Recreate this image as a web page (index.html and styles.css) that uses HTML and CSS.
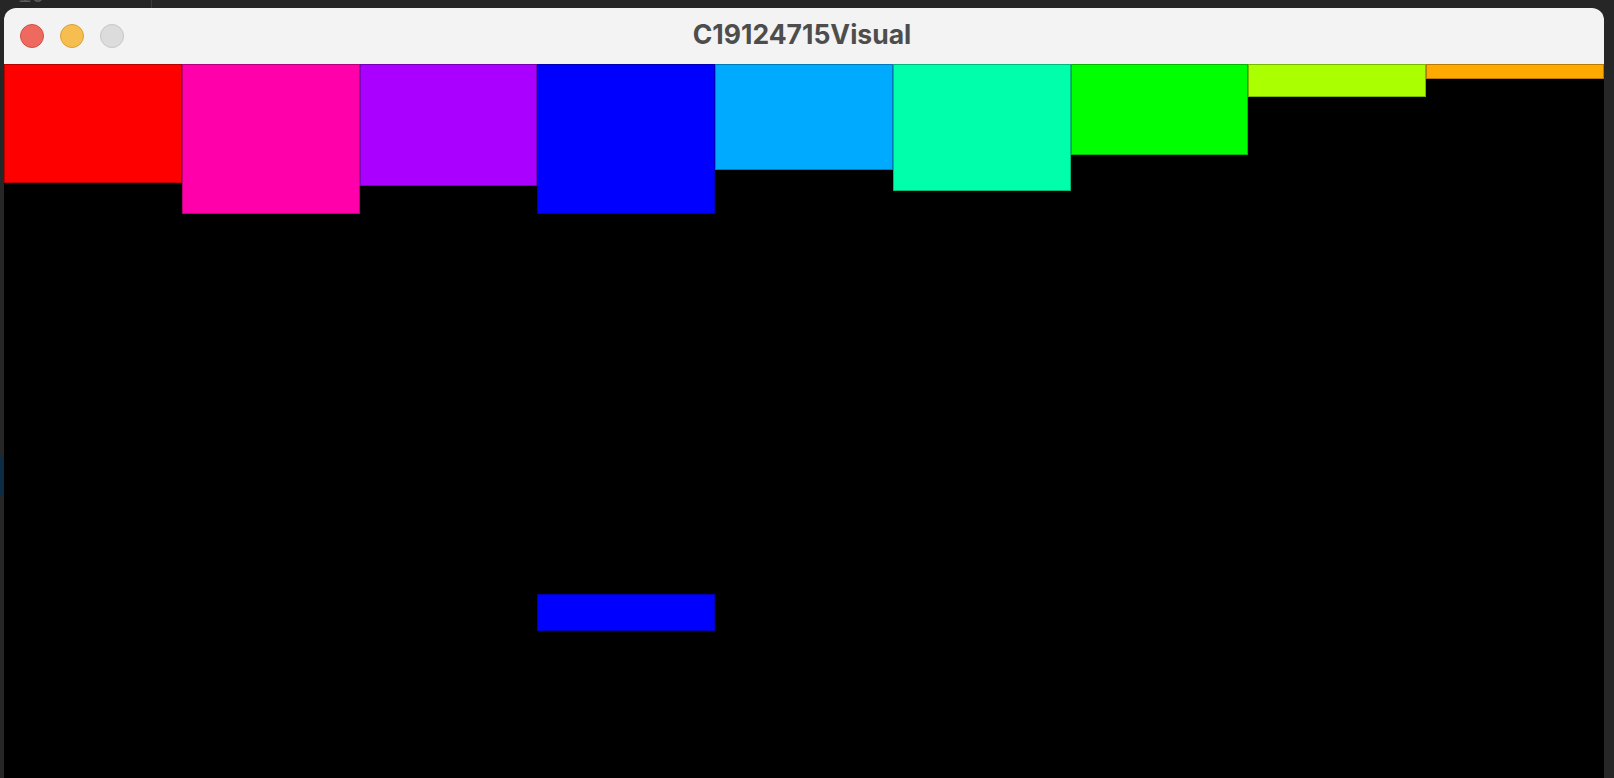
FILE: index.html
```html
<!DOCTYPE html>
<html lang="en">
<head>
<meta charset="utf-8">
<title>C19124715Visual</title>
<link rel="stylesheet" href="styles.css">
</head>
<body>
<div class="desktop">
  <div class="editor-peek">
    <span class="line-no">10</span>
    <span class="gutter"></span>
  </div>
  <div class="side-mark"></div>
  <div class="window">
    <div class="titlebar">
      <div class="lights">
        <span class="light close"></span>
        <span class="light min"></span>
        <span class="light max"></span>
      </div>
      <div class="title">C19124715Visual</div>
    </div>
    <div class="canvas">
      <div class="bar b1"></div>
      <div class="bar b2"></div>
      <div class="bar b3"></div>
      <div class="bar b4"></div>
      <div class="bar b5"></div>
      <div class="bar b6"></div>
      <div class="bar b7"></div>
      <div class="bar b8"></div>
      <div class="bar b9"></div>
      <div class="paddle"></div>
    </div>
  </div>
</div>
</body>
</html>
```
FILE: styles.css
```css
html, body {
  margin: 0;
  padding: 0;
  background: #262626;
  overflow: hidden;
}
.desktop {
  position: relative;
  width: 1614px;
  height: 778px;
  overflow: hidden;
  background: #262626;
}
.editor-peek {
  position: absolute;
  left: 0;
  top: 0;
  width: 1614px;
  height: 8px;
  overflow: hidden;
}
.line-no {
  position: absolute;
  left: 18px;
  top: -16px;
  font-family: "Liberation Mono", monospace;
  font-size: 22px;
  color: #5c5c5c;
}
.gutter {
  position: absolute;
  left: 151px;
  top: 0;
  width: 1px;
  height: 8px;
  background: #3c3c3c;
}
.side-mark {
  position: absolute;
  left: 0;
  top: 456px;
  width: 4px;
  height: 40px;
  background: #0e2b44;
}
.window {
  position: absolute;
  left: 4px;
  top: 8px;
  width: 1600px;
  height: 800px;
  border-radius: 12px 12px 0 0;
  overflow: hidden;
  background: #000;
  display: flex;
  flex-direction: column;
}
.titlebar {
  height: 56px;
  flex: 0 0 56px;
  box-sizing: border-box;
  padding-bottom: 4px;
  background: #f3f3f3;
  position: relative;
  display: flex;
  align-items: center;
  justify-content: center;
}
.lights {
  position: absolute;
  left: 16px;
  top: 16px;
  display: flex;
  gap: 16px;
}
.light {
  width: 24px;
  height: 24px;
  border-radius: 50%;
  box-sizing: border-box;
}
.close { background: #ee6a5f; border: 1px solid #d25146; }
.min { background: #f5be4f; border: 1px solid #d9a23c; }
.max { background: #dcdcdc; border: 1px solid #c6c6c6; }
.title {
  font-family: "Inter", "Liberation Sans", sans-serif;
  font-weight: 700;
  font-size: 26.5px;
  color: #4d4d4d;
  margin-left: -4px;
}
.canvas {
  flex: 1;
  display: grid;
  grid-template-columns: repeat(9, 1fr);
  align-items: start;
  background: #000;
}
.bar {
  grid-row: 1;
  box-shadow: inset 0 0 0 1px rgba(0, 0, 0, 0.28);
}
.b1 { grid-column: 1; height: 119px; background: #ff0000; }
.b2 { grid-column: 2; height: 150px; background: #ff00aa; }
.b3 { grid-column: 3; height: 122px; background: #aa00ff; }
.b4 { grid-column: 4; height: 150px; background: #0000ff; }
.b5 { grid-column: 5; height: 106px; background: #00aaff; }
.b6 { grid-column: 6; height: 127px; background: #00ffaa; }
.b7 { grid-column: 7; height: 91px; background: #00ff00; }
.b8 { grid-column: 8; height: 33px; background: #aaff00; }
.b9 { grid-column: 9; height: 15px; background: #ffaa00; }
.paddle {
  grid-row: 1;
  grid-column: 4;
  margin-top: 530px;
  height: 37px;
  background: #0000ff;
  box-shadow: inset 0 0 0 1px rgba(0, 0, 0, 0.28);
}
```
